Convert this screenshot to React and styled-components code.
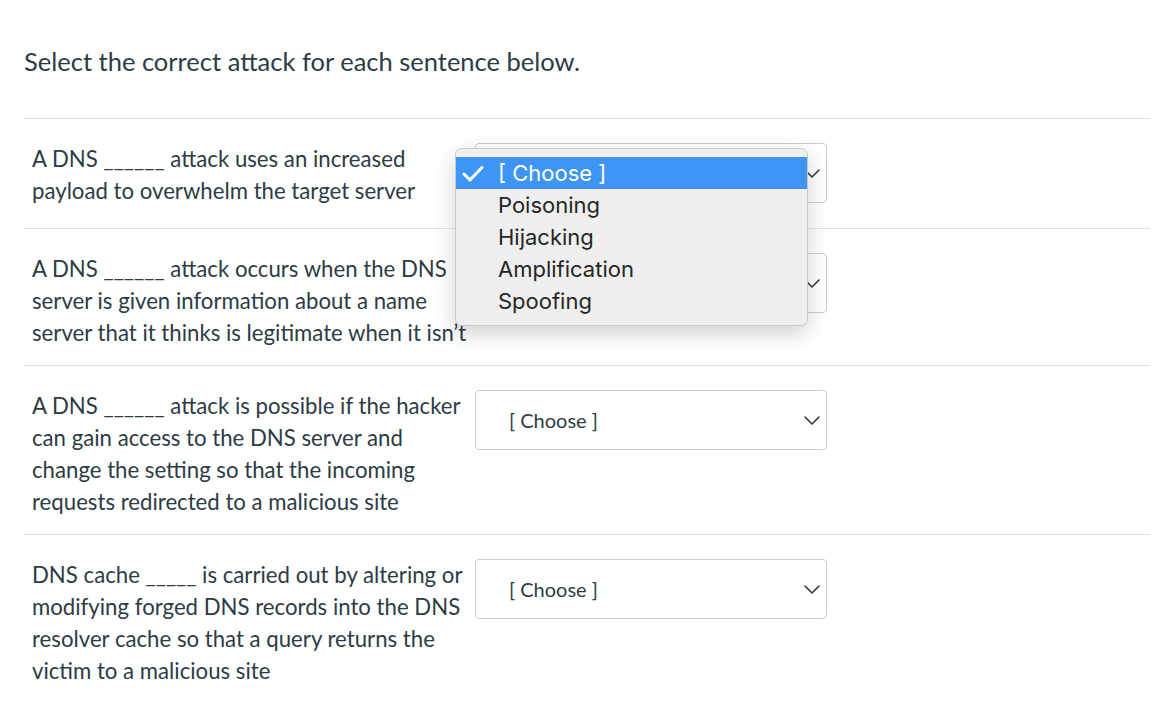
import styled, { createGlobalStyle } from "styled-components";

const GlobalStyle = createGlobalStyle`
  body {
    margin: 0;
    background: #ffffff;
    font-family: "Lato", "Noto Sans", sans-serif;
    color: #2d3b45;
  }
`;

const questions = [
  {
    text: "A DNS ______ attack uses an increased payload to overwhelm the target server",
    open: true,
  },
  {
    text: "A DNS ______ attack occurs when the DNS server is given information about a name server that it thinks is legitimate when it isn\u2019t",
  },
  {
    text: "A DNS ______ attack is possible if the hacker can gain access to the DNS server and change the setting so that the incoming requests redirected to a malicious site",
  },
  {
    text: "DNS cache _____ is carried out by altering or modifying forged DNS records into the DNS resolver cache so that a query returns the victim to a malicious site",
  },
];

const options = ["[ Choose ]", "Poisoning", "Hijacking", "Amplification", "Spoofing"];

function Chevron() {
  return (
    <svg width="16" height="9" viewBox="0 0 16 9" fill="none">
      <path d="M1 1l7 7 7-7" stroke="#2d3b45" strokeWidth="1.6" strokeLinecap="round" strokeLinejoin="round" />
    </svg>
  );
}

function Check() {
  return (
    <svg width="22" height="17" viewBox="0 0 22 17" fill="none">
      <path d="M2 9l6 6L20 2.5" stroke="#ffffff" strokeWidth="3" strokeLinecap="round" strokeLinejoin="round" />
    </svg>
  );
}

export default function App() {
  return (
    <>
      <GlobalStyle />
      <Page>
        <Title>Select the correct attack for each sentence below.</Title>
        <List>
          {questions.map((q, i) => (
            <Row key={i}>
              <Prompt>{q.text}</Prompt>
              <SelectWrap>
                <Select>
                  <span>[ Choose ]</span>
                  <Chevron />
                </Select>
                {q.open && (
                  <Popup>
                    {options.map((o, j) => (
                      <Option key={o} $active={j === 0}>
                        <Tick>{j === 0 && <Check />}</Tick>
                        <Label>{o}</Label>
                      </Option>
                    ))}
                  </Popup>
                )}
              </SelectWrap>
            </Row>
          ))}
        </List>
      </Page>
    </>
  );
}

const Page = styled.div`
  padding: 43px 10px 0 24px;
`;

const Title = styled.h1`
  margin: 0 0 39px;
  font-size: 25.5px;
  font-weight: 400;
  line-height: 36px;
  color: #2d3b45;
`;

const List = styled.div`
  border-top: 1px solid #dfe2e4;
`;

const Row = styled.div`
  display: flex;
  align-items: flex-start;
  gap: 3px;
  padding: 24px 0 16px 8px;
  border-bottom: 1px solid #dfe2e4;
  &:last-child {
    border-bottom: none;
  }
`;

const Prompt = styled.div`
  width: 440px;
  flex-shrink: 0;
  font-size: 22.2px;
  line-height: 32px;
`;

const SelectWrap = styled.div`
  position: relative;
  margin-bottom: 9px;
`;

const Select = styled.div`
  box-sizing: border-box;
  width: 352px;
  height: 60px;
  border: 1px solid #c7cdd1;
  border-radius: 4px;
  background: #fff;
  display: flex;
  align-items: center;
  justify-content: space-between;
  padding: 0 6px 0 33px;
  font-size: 20px;
  color: #2d3b45;
`;

const Popup = styled.div`
  position: absolute;
  left: -20px;
  top: 5px;
  width: 353px;
  box-sizing: border-box;
  padding: 8px 0;
  background: #efefef;
  border: 1px solid #c9c9c9;
  border-radius: 7px;
  box-shadow: 0 8px 22px rgba(0, 0, 0, 0.18);
  font-family: "Inter", "Noto Sans", sans-serif;
  z-index: 10;
`;

const Option = styled.div`
  display: flex;
  align-items: center;
  height: 32px;
  font-size: 22px;
  color: ${(p) => (p.$active ? "#ffffff" : "#262626")};
  background: ${(p) => (p.$active ? "#3e95f5" : "transparent")};
`;

const Tick = styled.span`
  box-sizing: border-box;
  flex: 0 0 42px;
  display: flex;
  align-items: center;
  padding-left: 6px;
`;

const Label = styled.span`
  flex: 1;
`;
